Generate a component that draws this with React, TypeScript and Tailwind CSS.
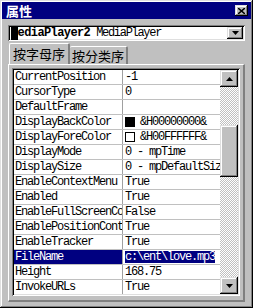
import { ReactNode } from 'react';

type Row = { name: string; value: ReactNode; selected?: boolean };

const raised =
  'shadow-[inset_-1px_-1px_#000,inset_1px_1px_#dfdfdf,inset_-2px_-2px_#808080,inset_2px_2px_#fff]';
const sunken =
  'shadow-[inset_1px_1px_#808080,inset_-1px_-1px_#fff,inset_2px_2px_#000,inset_-2px_-2px_#dfdfdf]';

function Swatch({ color }: { color: string }) {
  return <span className={`inline-block w-[10px] h-[10px] border border-black mr-[5px] ${color}`} />;
}

const rows: Row[] = [
  { name: 'CurrentPosition', value: '-1' },
  { name: 'CursorType', value: '0' },
  { name: 'DefaultFrame', value: '' },
  { name: 'DisplayBackColor', value: <><Swatch color="bg-black" />&amp;H00000000&amp;</> },
  { name: 'DisplayForeColor', value: <><Swatch color="bg-white" />&amp;H00FFFFFF&amp;</> },
  { name: 'DisplayMode', value: '0 - mpTime' },
  { name: 'DisplaySize', value: '0 - mpDefaultSize' },
  { name: 'EnableContextMenu', value: 'True' },
  { name: 'Enabled', value: 'True' },
  { name: 'EnableFullScreenControls', value: 'False' },
  { name: 'EnablePositionControls', value: 'True' },
  { name: 'EnableTracker', value: 'True' },
  { name: 'FileName', value: 'c:\\ent\\love.mp3', selected: true },
  { name: 'Height', value: '168.75' },
  { name: 'InvokeURLs', value: 'True' },
];

function Arrow({ up }: { up?: boolean }) {
  return (
    <svg width="7" height="4" viewBox="0 0 7 4" className={up ? '' : 'rotate-180'}>
      <path d="M3.5 0 L7 4 L0 4 Z" fill="#000" />
    </svg>
  );
}

export default function App() {
  const mono = "font-['Liberation_Mono',monospace] text-[12px] tracking-[-1.2px]";
  return (
    <div className="w-[253px] h-[308px] bg-[#c0c0c0] shadow-[inset_-1px_-1px_#000,inset_1px_1px_#dfdfdf,inset_-2px_-2px_#808080,inset_2px_2px_#fff] p-[2px] flex flex-col font-['Noto_Sans_CJK_SC',sans-serif]">
      {/* title bar */}
      <div className="h-[17px] bg-[#000080] flex items-center justify-between pl-[4px] pr-[3px]">
        <span className="text-white font-bold text-[13px] leading-none">属性</span>
        <div className={`w-[13px] h-[11px] bg-[#c0c0c0] ${raised} flex items-center justify-center`}>
          <svg width="7" height="6" viewBox="0 0 7 6">
            <path d="M0 0 L7 6 M7 0 L0 6" stroke="#000" strokeWidth="1.5" />
          </svg>
        </div>
      </div>

      {/* combo */}
      <div className={`mt-[6px] mx-[6px] h-[16px] bg-white ${sunken} flex items-center pl-[3px] pr-[2px]`}>
        <div className="flex-1 flex items-center font-['Liberation_Mono',monospace] text-[12px] leading-none text-black whitespace-nowrap">
          <span className="font-bold tracking-[-0.6px]">
            <span className="bg-black">M</span>ediaPlayer2
          </span>
          <span className="tracking-[-1.3px]">&nbsp;MediaPlayer</span>
        </div>
        <div className={`w-[16px] h-[12px] bg-[#c0c0c0] ${raised} flex items-center justify-center`}>
          <Arrow />
        </div>
      </div>

      {/* tabs */}
      <div className="mt-[2px] ml-[7px] flex items-end h-[21px] relative z-10">
        <div className="w-[61px] h-[21px] bg-[#c0c0c0] border-l border-t border-white border-r-2 border-r-[#808080] rounded-t-[2px] flex items-center justify-center text-[13px] text-black pb-[1px]">
          按字母序
        </div>
        <div className="w-[58px] h-[18px] bg-[#c0c0c0] border-t border-white border-r-2 border-r-[#808080] rounded-t-[2px] flex items-center justify-center text-[13px] text-black">
          按分类序
        </div>
      </div>

      {/* panel */}
      <div className="mx-[6px] h-[238px] border-l border-t border-white border-r-2 border-b-2 border-r-[#808080] border-b-[#808080] pt-[3px] pl-[3px] pr-[3px] pb-[4px]">
        <div className={`h-full ${sunken} p-[2px] flex bg-white`}>
          <div className={`flex-1 ${mono} leading-none text-black overflow-hidden`}>
            {rows.map((r) => (
              <div key={r.name} className="h-[15px] flex border-b border-[#c0c0c0]">
                <div
                  className={`w-[109px] shrink-0 pl-[1px] flex items-center whitespace-nowrap overflow-hidden border-r border-[#a0a0a0] ${
                    r.selected ? 'bg-[#000080] text-white' : ''
                  }`}
                >
                  {r.name}
                </div>
                <div className="flex-1 pl-[2px] flex items-center whitespace-nowrap overflow-hidden">
                  {r.selected ? <span className="bg-[#000080] text-white">{r.value}</span> : r.value}
                </div>
              </div>
            ))}
          </div>
          {/* scrollbar */}
          <div className="w-[18px] flex flex-col">
            <div className={`h-[17px] bg-[#c0c0c0] ${raised} flex items-center justify-center`}>
              <Arrow up />
            </div>
            <div className="h-[38px] bg-[repeating-conic-gradient(#ffffff_0%_25%,#c0c0c0_0%_50%)] bg-[length:2px_2px]" />
            <div className={`h-[52px] bg-[#c0c0c0] ${raised}`} />
            <div className="flex-1 bg-[repeating-conic-gradient(#ffffff_0%_25%,#c0c0c0_0%_50%)] bg-[length:2px_2px]" />
            <div className={`h-[17px] bg-[#c0c0c0] ${raised} flex items-center justify-center`}>
              <Arrow />
            </div>
          </div>
        </div>
      </div>
    </div>
  );
}
